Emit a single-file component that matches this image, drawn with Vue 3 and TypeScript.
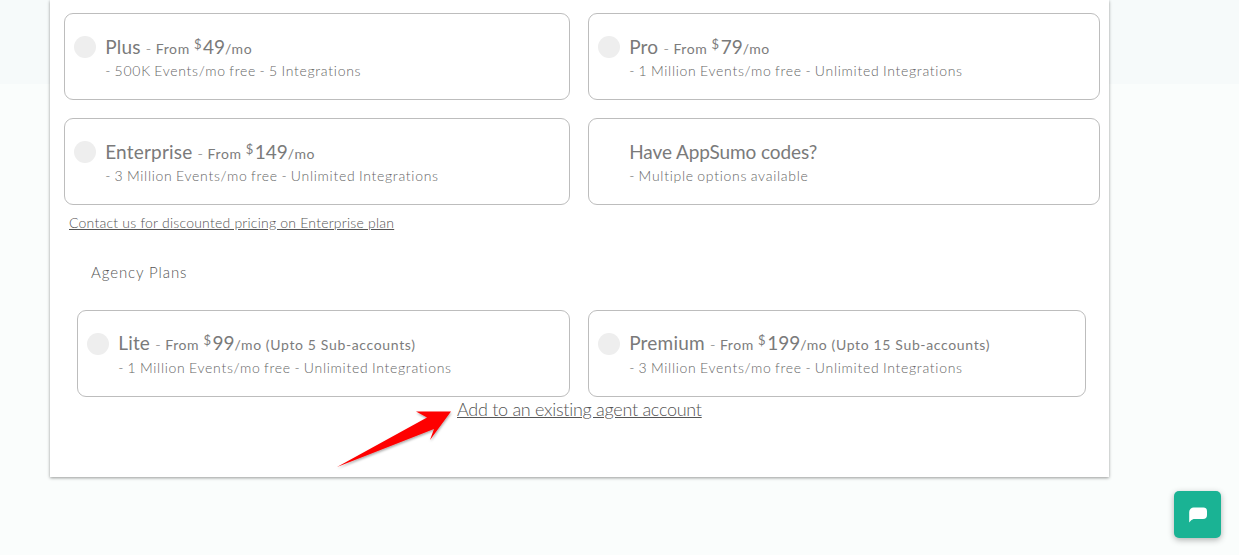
<script setup lang="ts">
interface Plan {
  name: string
  price?: string
  extra?: string
  note: string
  radio: boolean
}

const mainPlans: Plan[] = [
  { name: 'Plus', price: '49', note: '- 500K Events/mo free - 5 Integrations', radio: true },
  { name: 'Pro', price: '79', note: '- 1 Million Events/mo free - Unlimited Integrations', radio: true },
  { name: 'Enterprise', price: '149', note: '- 3 Million Events/mo free - Unlimited Integrations', radio: true },
  { name: 'Have AppSumo codes?', note: '- Multiple options available', radio: false }
]

const agencyPlans: Plan[] = [
  { name: 'Lite', price: '99', extra: '(Upto 5 Sub-accounts)', note: '- 1 Million Events/mo free - Unlimited Integrations', radio: true },
  { name: 'Premium', price: '199', extra: '(Upto 15 Sub-accounts)', note: '- 3 Million Events/mo free - Unlimited Integrations', radio: true }
]
</script>

<template>
  <div class="page">
    <main class="sheet">
      <div class="grid main-grid">
        <label v-for="p in mainPlans" :key="p.name" class="plan">
          <span class="radio" :class="{ hidden: !p.radio }" />
          <span class="info">
            <span class="title">
              <span class="name" :class="{ plain: !p.price }">{{ p.name }}</span>
              <template v-if="p.price">
                <span class="dash"> - </span><span class="from">From </span><sup class="cur">$</sup><span class="price">{{ p.price }}</span><span class="from">/mo</span>
              </template>
            </span>
            <span class="note">{{ p.note }}</span>
          </span>
        </label>
      </div>
      <a class="contact">Contact us for discounted pricing on Enterprise plan</a>
      <h4 class="agency">Agency Plans</h4>
      <div class="grid agency-grid">
        <label v-for="p in agencyPlans" :key="p.name" class="plan">
          <span class="radio" />
          <span class="info">
            <span class="title">
              <span class="name">{{ p.name }}</span>
              <span class="dash"> - </span><span class="from">From </span><sup class="cur">$</sup><span class="price">{{ p.price }}</span><span class="from">/mo </span><span class="extra">{{ p.extra }}</span>
            </span>
            <span class="note">{{ p.note }}</span>
          </span>
        </label>
      </div>
      <a class="existing">Add to an existing agent account</a>
    </main>

    <svg class="arrow" width="130" height="70" viewBox="330 405 130 70">
      <defs>
        <filter id="arrow-shadow" x="-10%" y="-10%" width="120%" height="130%">
          <feDropShadow dx="0.5" dy="1.5" stdDeviation="1" flood-color="#000" flood-opacity="0.35" />
        </filter>
      </defs>
      <path d="M337 467 L427 417.5 L416 411.5 L451 411.5 L430 440 L434 429 Z" fill="#fe0000" filter="url(#arrow-shadow)" />
    </svg>

    <button class="chat" aria-label="Chat">
      <svg width="20" height="18" viewBox="0 0 20 18">
        <path d="M6 1.5 H15.5 A3.5 3.5 0 0 1 19 5 V9 A4 4 0 0 1 15 13 H5.5 Q3 13.5 1.2 16.6 V6 A4.5 4.5 0 0 1 6 1.5 Z" fill="#fff" />
      </svg>
    </button>
  </div>
</template>

<style scoped>
.page {
  position: relative;
  height: 555px;
  overflow: hidden;
  background: linear-gradient(#f6fafa 0, #f6fafa 84px, #fafdfc 84px);
  font-family: Lato, "Liberation Sans", sans-serif;
  color: #6b6b6b;
}
.sheet {
  width: 1059px;
  height: 477px;
  margin-left: 50px;
  padding: 13px 9px 0 14px;
  box-sizing: border-box;
  background: #fff;
  box-shadow: 0 1px 3px rgba(0, 0, 0, 0.4);
}
.grid {
  display: grid;
  column-gap: 18px;
  row-gap: 18px;
}
.main-grid { grid-template-columns: 506px 512px; }
.agency-grid {
  grid-template-columns: 493px 498px;
  margin-left: 13px;
}
.plan {
  display: flex;
  align-items: flex-start;
  height: 87px;
  box-sizing: border-box;
  padding: 22px 9px 0;
  border: 1px solid #bdbdbd;
  border-radius: 9px;
}
.radio {
  flex: none;
  width: 22px;
  height: 22px;
  margin-right: 9.2px;
  border-radius: 50%;
  background: #eee;
}
.radio.hidden { background: none; }
.info {
  display: flex;
  flex-direction: column;
  margin-top: -2px;
}
.title {
  height: 26px;
  line-height: 26px;
  font-size: 14px;
  letter-spacing: 0.5px;
  color: #7c7c7c;
  white-space: pre;
}
.agency-grid .title {
  margin-top: -1px;
  margin-bottom: 1px;
}
.name, .price {
  font-size: 19px;
  color: #7a7a7a;
}
.name { letter-spacing: 0.2px; }
.name.plain { letter-spacing: -0.1px; }
.price { letter-spacing: 0; }
.dash {
  font-size: 16px;
  font-weight: 300;
  margin-right: -1px;
}
.from { letter-spacing: 0.6px; }
.extra { letter-spacing: 0.65px; }
.cur {
  font-size: 13px;
  line-height: 0;
  vertical-align: 5px;
  margin-right: 1px;
}
.note {
  margin-top: 2px;
  font-size: 14px;
  line-height: 18px;
  font-weight: 300;
  letter-spacing: 0.72px;
  word-spacing: -1px;
  color: #666;
  white-space: nowrap;
}
.contact {
  display: block;
  margin: 9px 0 0 5px;
  font-size: 14px;
  line-height: 18px;
  font-weight: 300;
  color: #555;
  text-decoration: underline;
  letter-spacing: 0.22px;
}
.agency {
  margin: 31px 0 0 27px;
  font-size: 15px;
  line-height: 18px;
  font-weight: 300;
  letter-spacing: 0.9px;
  color: #555;
}
.agency-grid { margin-top: 29px; }
.existing {
  display: block;
  margin: 1px 0 0 393px;
  font-size: 18px;
  line-height: 22px;
  font-weight: 300;
  letter-spacing: -0.28px;
  color: #555;
  text-decoration: underline;
}
.arrow {
  position: absolute;
  left: 330px;
  top: 405px;
}
.chat {
  position: absolute;
  left: 1174px;
  top: 491px;
  display: flex;
  align-items: center;
  justify-content: center;
  width: 47px;
  height: 47px;
  padding: 0;
  border: 0;
  border-radius: 5px;
  background: #1ab394;
  box-shadow: 0 2px 6px rgba(0, 0, 0, 0.3);
}
</style>

<style>
html, body { margin: 0; overflow: hidden; }
</style>
